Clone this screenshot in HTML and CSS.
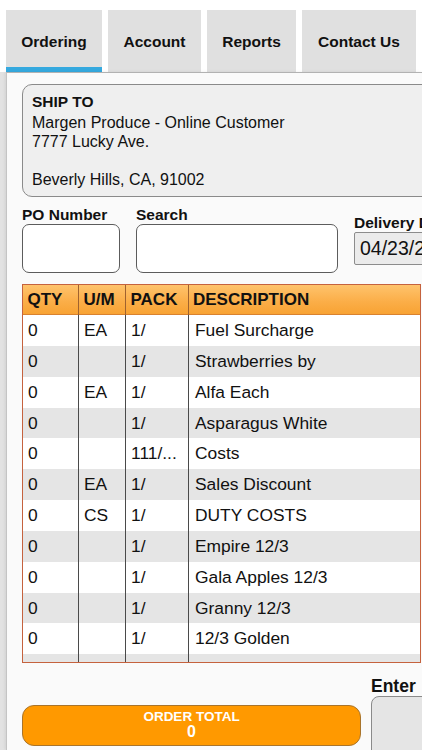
FILE: index.html
```html
<!DOCTYPE html>
<html lang="en">
<head>
<meta charset="utf-8">
<title>Ordering</title>
<link rel="stylesheet" href="styles.css">
</head>
<body>
<div class="tabs">
  <div class="tab tab-ordering active">Ordering</div>
  <div class="tab tab-account">Account</div>
  <div class="tab tab-reports">Reports</div>
  <div class="tab tab-contact">Contact Us</div>
</div>
<div class="main">
  <div class="panel">
    <div class="shipto">
      <div class="ship-title">SHIP TO</div>
      <div class="ship-line">Margen Produce - Online Customer</div>
      <div class="ship-line">7777 Lucky Ave.</div>
      <div class="ship-line">&nbsp;</div>
      <div class="ship-line">Beverly Hills, CA, 91002</div>
    </div>

    <div class="fields">
      <div class="field field-po">
        <div class="label">PO Number</div>
        <div class="input input-po"></div>
      </div>
      <div class="field field-search">
        <div class="label">Search</div>
        <div class="input input-search"></div>
      </div>
      <div class="field field-delivery">
        <div class="label">Delivery Date</div>
        <div class="date">04/23/2024</div>
      </div>
    </div>

    <div class="grid">
      <div class="row head">
        <div class="cell">QTY</div>
        <div class="cell">U/M</div>
        <div class="cell">PACK</div>
        <div class="cell desc">DESCRIPTION</div>
      </div>
      <div class="row"><div class="cell">0</div><div class="cell">EA</div><div class="cell">1/</div><div class="cell desc">Fuel Surcharge</div></div>
      <div class="row alt"><div class="cell">0</div><div class="cell"></div><div class="cell">1/</div><div class="cell desc">Strawberries by</div></div>
      <div class="row"><div class="cell">0</div><div class="cell">EA</div><div class="cell">1/</div><div class="cell desc">Alfa Each</div></div>
      <div class="row alt"><div class="cell">0</div><div class="cell"></div><div class="cell">1/</div><div class="cell desc">Asparagus White</div></div>
      <div class="row"><div class="cell">0</div><div class="cell"></div><div class="cell">111/...</div><div class="cell desc">Costs</div></div>
      <div class="row alt"><div class="cell">0</div><div class="cell">EA</div><div class="cell">1/</div><div class="cell desc">Sales Discount</div></div>
      <div class="row"><div class="cell">0</div><div class="cell">CS</div><div class="cell">1/</div><div class="cell desc">DUTY COSTS</div></div>
      <div class="row alt"><div class="cell">0</div><div class="cell"></div><div class="cell">1/</div><div class="cell desc">Empire 12/3</div></div>
      <div class="row"><div class="cell">0</div><div class="cell"></div><div class="cell">1/</div><div class="cell desc">Gala Apples 12/3</div></div>
      <div class="row alt"><div class="cell">0</div><div class="cell"></div><div class="cell">1/</div><div class="cell desc">Granny 12/3</div></div>
      <div class="row"><div class="cell">0</div><div class="cell"></div><div class="cell">1/</div><div class="cell desc">12/3 Golden</div></div>
      <div class="row alt"><div class="cell">0</div><div class="cell"></div><div class="cell">1/</div><div class="cell desc">Bio Red Delicious</div></div>
    </div>

    <div class="footer">
      <div class="order-total">
        <div class="ot-title">ORDER TOTAL</div>
        <div class="ot-value">0</div>
      </div>
      <div class="enter">
        <div class="enter-label">Enter</div>
        <div class="enter-box"></div>
      </div>
    </div>
  </div>
</div>
</body>
</html>
```

FILE: styles.css
```css
html, body {
  margin: 0;
  padding: 0;
  overflow: hidden;
  background: #ffffff;
}
body {
  font-family: "Liberation Sans", Arial, sans-serif;
  color: #111111;
  width: 422px;
  height: 750px;
}

/* Tabs */
.tabs {
  display: flex;
  gap: 6px;
  padding: 10px 0 0 6px;
  height: 72px;
  box-sizing: border-box;
}
.tab {
  flex-shrink: 0;
  height: 62px;
  box-sizing: border-box;
  background: #e0e0e0;
  font-weight: bold;
  font-size: 15.5px;
  line-height: 20px;
  padding-top: 22px;
  text-align: center;
  white-space: nowrap;
}
.tab-ordering { width: 96px; }
.tab-account { width: 93px; }
.tab-reports { width: 89px; }
.tab-contact { width: 114px; }
.tab.active {
  border-bottom: 5px solid #35a9df;
}

/* Main panel */
.main {
  display: flex;
  padding-left: 6px;
  background: linear-gradient(90deg, #e2e2e2, #efefef);
  height: 678px;
}
.panel {
  flex: 1;
  min-width: 0;
  border-left: 1px solid #c4c4c4;
  border-top: 1px solid #b2b2b2;
  background: #fafafa;
  padding: 11px 0 0 15px;
  overflow: hidden;
  box-shadow: -1px 0 3px rgba(0, 0, 0, 0.08);
}

/* Ship to */
.shipto {
  width: 420px;
  box-sizing: border-box;
  border: 1px solid #8a8a8a;
  border-radius: 10px;
  background: #efefef;
  padding: 7px 9px;
}
.ship-title {
  font-weight: bold;
  font-size: 15.5px;
  line-height: 19px;
  margin-bottom: 2px;
}
.ship-line {
  font-size: 16px;
  line-height: 19px;
  white-space: nowrap;
}

/* Fields */
.fields {
  display: flex;
  gap: 16px;
  margin-top: 9px;
}
.field {
  flex-shrink: 0;
}
.label {
  font-weight: bold;
  font-size: 15.5px;
  line-height: 18px;
  white-space: nowrap;
}
.input {
  height: 49px;
  box-sizing: border-box;
  border: 1px solid #5c5c5c;
  border-radius: 7px;
  background: #ffffff;
}
.field-po { width: 98px; }
.field-search { width: 202px; }
.field-delivery {
  width: 120px;
  padding-top: 8px;
}
.date {
  height: 33px;
  box-sizing: border-box;
  border: 1px solid #8c8c8c;
  border-radius: 2px;
  background: #ebebeb;
  font-size: 19.5px;
  line-height: 31px;
  padding-left: 5px;
  white-space: nowrap;
}

/* Grid */
.grid {
  margin-top: 11px;
  width: 399px;
  height: 379px;
  box-sizing: border-box;
  border: 1px solid #c5623e;
  overflow: hidden;
  background: #ffffff;
}
.row {
  display: grid;
  grid-template-columns: 56px 47px 63px 1fr;
  height: 30.85px;
  font-size: 17.4px;
  line-height: 30.85px;
}
.row.alt {
  background: #e5e5e5;
}
.cell {
  box-sizing: border-box;
  border-right: 1px solid #4a4a4a;
  padding-left: 5px;
  white-space: nowrap;
  overflow: hidden;
}
.cell.desc {
  border-right: none;
  padding-left: 6px;
}
.row.head {
  height: 30px;
  line-height: 30px;
  font-weight: bold;
  font-size: 17px;
  background: linear-gradient(180deg, #fec36c 0%, #fbae48 55%, #f8a232 100%);
  box-shadow: inset 0 -1px 0 #d9822f;
}
.row.head .cell {
  border-right-color: #a0622e;
  padding-left: 4.5px;
}
.row.head .cell.desc {
  padding-left: 4px;
}

/* Footer */
.footer {
  display: flex;
  gap: 10px;
  margin-top: 13px;
}
.order-total {
  flex-shrink: 0;
  width: 339px;
  height: 41px;
  margin-top: 29px;
  box-sizing: border-box;
  border: 1px solid #a8742c;
  border-radius: 12px;
  background: #ff9900;
  color: #ffffff;
  font-weight: bold;
  text-align: center;
  padding-top: 3px;
}
.ot-title {
  font-size: 13.5px;
  line-height: 15px;
}
.ot-value {
  font-size: 16px;
  line-height: 15px;
}
.enter {
  flex-shrink: 0;
}
.enter-label {
  font-weight: bold;
  font-size: 17.5px;
  line-height: 20px;
}
.enter-box {
  width: 80px;
  height: 70px;
  box-sizing: border-box;
  border: 1px solid #8a8a8a;
  border-radius: 8px;
  background: #e5e5e5;
}
```
